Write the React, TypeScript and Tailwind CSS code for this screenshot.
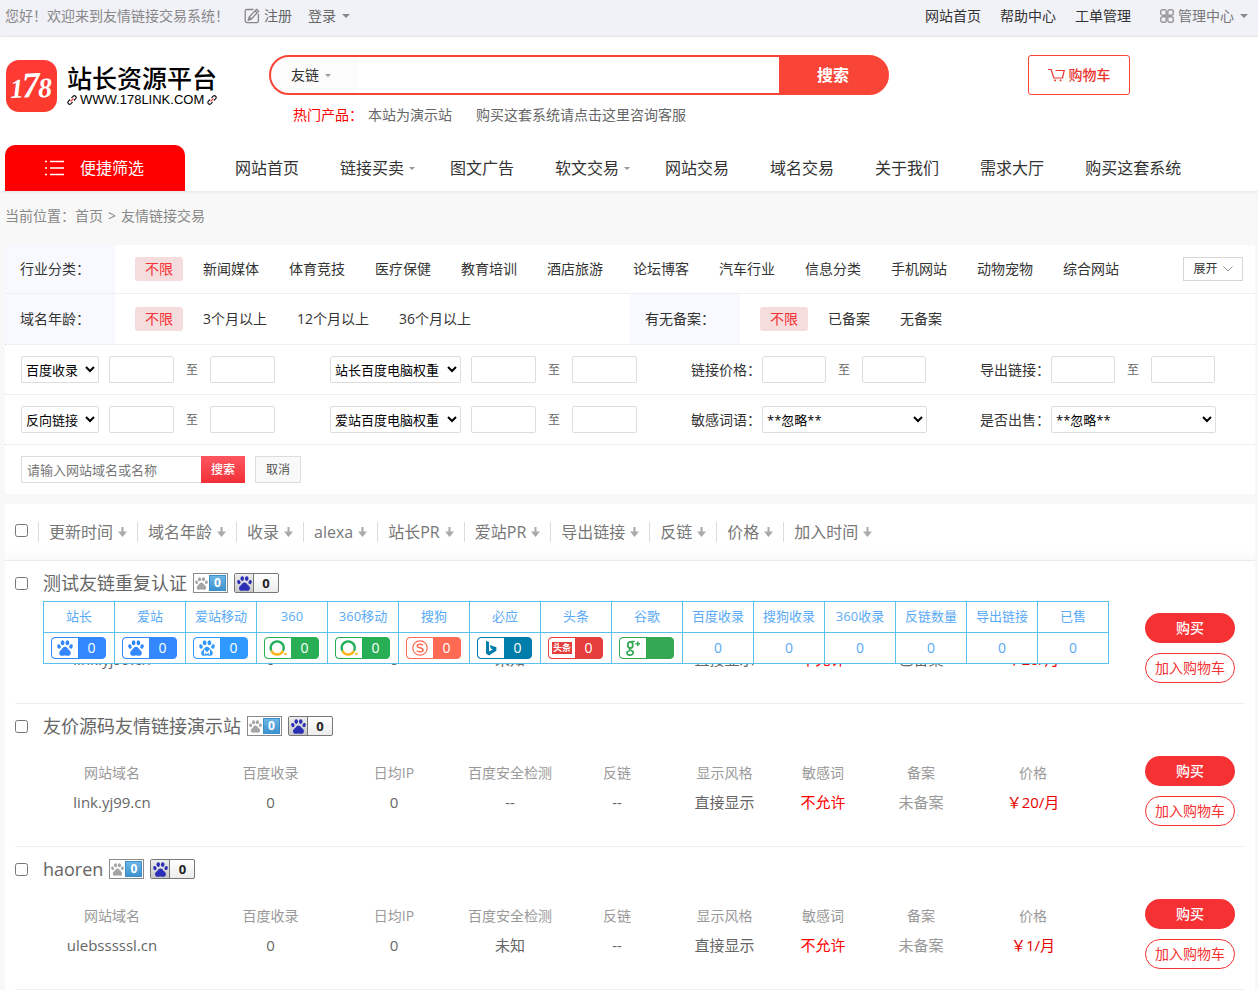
import React from 'react';

const topLinks = ['网站首页', '帮助中心', '工单管理'];

const navItems = [
  { name: '网站首页' },
  { name: '链接买卖', sub: true },
  { name: '图文广告' },
  { name: '软文交易', sub: true },
  { name: '网站交易' },
  { name: '域名交易' },
  { name: '关于我们' },
  { name: '需求大厅' },
  { name: '购买这套系统' },
];

const categories = ['不限', '新闻媒体', '体育竞技', '医疗保健', '教育培训', '酒店旅游', '论坛博客', '汽车行业', '信息分类', '手机网站', '动物宠物', '综合网站'];
const ages = ['不限', '3个月以上', '12个月以上', '36个月以上'];
const records = ['不限', '已备案', '无备案'];
const sorts = ['更新时间', '域名年龄', '收录', 'alexa', '站长PR', '爱站PR', '导出链接', '反链', '价格', '加入时间'];

const columns = [
  { name: '网站域名', width: 'w-[184px]' },
  { name: '百度收录', width: 'w-[133px]' },
  { name: '日均IP', width: 'w-[114px]' },
  { name: '百度安全检测', width: 'w-[118px]' },
  { name: '反链', width: 'w-[96px]' },
  { name: '显示风格', width: 'w-[119px]' },
  { name: '敏感词', width: 'w-[78px]' },
  { name: '备案', width: 'w-[118px]' },
  { name: '价格', width: 'w-[106px]' },
];

const sites = [
  { title: '测试友链重复认证', values: ['link.yj99.cn', '0', '0', '未知', '--', '直接显示', '不允许', '已备案', '￥20/月'], detail: true },
  { title: '友价源码友情链接演示站', values: ['link.yj99.cn', '0', '0', '--', '--', '直接显示', '不允许', '未备案', '￥20/月'] },
  { title: 'haoren', values: ['ulebsssssl.cn', '0', '0', '未知', '--', '直接显示', '不允许', '未备案', '￥1/月'] },
];

const Paw: React.FC<{ className?: string; mobile?: boolean }> = ({ className, mobile }) => (
  <svg viewBox="0 0 16 16" className={className} fill="currentColor" aria-hidden="true">
    <ellipse cx="5.6" cy="2.7" rx="1.9" ry="2.5" />
    <ellipse cx="10.4" cy="2.7" rx="1.9" ry="2.5" />
    <ellipse cx="2" cy="6.5" rx="1.7" ry="2.2" transform="rotate(-15 2 6.5)" />
    <ellipse cx="14" cy="6.5" rx="1.7" ry="2.2" transform="rotate(15 14 6.5)" />
    <path d="M8 6.8c2 0 2.6 1.9 4.5 3.6 2.3 2 1.3 5.4-1.3 5.4-1.3 0-2-.3-3.2-.3s-1.9.3-3.2.3c-2.6 0-3.600-3.400-1.300-5.400C5.400 8.700 6 6.800 8 6.800z" />
    {mobile && <path d="M5.600 14.500v-3.800l2.400 2.600 2.400-2.600v3.800" fill="none" stroke="#fff" strokeWidth="1.300" />}
  </svg>
);

const Caret: React.FC<{ className: string }> = ({ className }) => (
  <svg viewBox="0 0 8 4" className={className} fill="currentColor" aria-hidden="true">
    <path d="M0 0h8L4 4z" />
  </svg>
);

const Ring = () => (
  <svg viewBox="0 0 18 16" className="h-4 w-[18px]" fill="none" aria-hidden="true">
    <path d="M2.400 10.800A6.500 6.500 0 1 1 14 10.800" stroke="#22b05a" strokeWidth="2.400" />
    <path d="M2.400 10.800c2.300 4.900 9 4.900 11.600 0" stroke="#f9b51c" strokeWidth="2.600" />
    <circle cx="16.400" cy="14" r="1.300" fill="#f9b51c" />
  </svg>
);

const Sogou = () => (
  <svg viewBox="0 0 16 16" className="size-4" fill="none" stroke="#ff6a55" aria-hidden="true">
    <circle cx="8" cy="8" r="7.200" strokeWidth="1.200" />
    <path d="M11 5.200C9.300 3.900 5.200 3.900 5.200 6c0 2.300 5.800 1.400 5.800 4 0 2.300-4.300 2.200-6.200.8" strokeWidth="1.600" />
  </svg>
);

const Bing = () => (
  <svg viewBox="0 0 12 16" className="h-4 w-3" fill="#007daa" aria-hidden="true">
    <path d="M1 .8l3 1.100v9.700l3.800-2-2-1L4.700 5 11.400 7.200v3.600L4 15.600l-3-2z" />
  </svg>
);

const Toutiao = () => (
  <span className="flex h-3 w-5 items-center justify-center bg-[#e63d3d] text-[9px] leading-3 font-bold text-white">头条</span>
);

const Google = () => (
  <svg viewBox="0 0 18 18" className="size-[18px]" fill="none" stroke="#34a853" aria-hidden="true">
    <ellipse cx="6.300" cy="6" rx="2.500" ry="3.100" strokeWidth="1.800" />
    <path d="M7.500 2.500h3.200M6.200 9.200c-2 1.400.5 2 1.900 2.800 2.300 1.500.8 4.300-2.300 4.100-3.500-.2-4-3.700-.1-4.100" strokeWidth="1.600" />
    <path d="M13.800 2.500v4.500M11.500 4.800h4.600" strokeWidth="1.500" />
  </svg>
);

const bluePaw = <Paw className="size-4 text-[#3388ff]" />;

const stats = [
  { name: '站长', icon: bluePaw, box: 'border-[#3388ff] bg-[#3388ff]', value: '0' },
  { name: '爱站', icon: bluePaw, box: 'border-[#3388ff] bg-[#3388ff]', value: '0' },
  { name: '爱站移动', icon: <Paw mobile className="size-4 text-[#2f99ff]" />, box: 'border-[#2f99ff] bg-[#2f99ff]', value: '0' },
  { name: '360', icon: <Ring />, box: 'border-[#28af55] bg-[#28af55]', value: '0' },
  { name: '360移动', icon: <Ring />, box: 'border-[#28af55] bg-[#28af55]', value: '0' },
  { name: '搜狗', icon: <Sogou />, box: 'border-[#ff6a55] bg-[#ff6a55]', value: '0' },
  { name: '必应', icon: <Bing />, box: 'border-[#007daa] bg-[#007daa]', value: '0' },
  { name: '头条', icon: <Toutiao />, box: 'border-[#e63d3d] bg-[#e63d3d]', value: '0' },
  { name: '谷歌', icon: <Google />, box: 'border-[#34a853] bg-[#34a853]', value: '' },
  { name: '百度收录', value: '0' },
  { name: '搜狗收录', value: '0' },
  { name: '360收录', value: '0' },
  { name: '反链数量', value: '0' },
  { name: '导出链接', value: '0' },
  { name: '已售', value: '0' },
];

const ChainIcon = () => (
  <svg viewBox="0 0 10 10" className="size-[10px]" fill="none" stroke="#111" strokeWidth="1.100" aria-hidden="true">
    <path d="M4.500 3l1.700-1.800c1.500-1.500 4 .8 2.500 2.500L7 5.500M5.500 7L3.800 8.800c-1.500 1.500-4-.8-2.500-2.500L3 4.500" />
    <path d="M3.600 6.400l2.800-2.800" stroke="#e02020" />
  </svg>
);

const TopBar = () => (
  <div className="flex h-[37px] items-center justify-between border-b border-[#e8e8ea] bg-[#f1f1f8] pr-[10px] pb-1 pl-[5px] text-sm leading-5">
    <div className="flex items-center">
      <span className="text-[#888]">您好！欢迎来到友情链接交易系统！</span>
      <a href="#" className="ml-[15px] flex items-center gap-1 text-[#666]">
        <svg viewBox="0 0 16 16" className="size-4" fill="none" stroke="#888" strokeWidth="1.300" aria-hidden="true">
          <path d="M9.500 1.500H3A1.800 1.800 0 0 0 1.200 3.300v9.500A1.800 1.800 0 0 0 3 14.600h9.600a1.800 1.800 0 0 0 1.800-1.800V6" />
          <path d="M12.600 1.300l2 1.900-7.300 7.900-3 1.100.8-3.200zM11 3l2 1.900M5.200 9l2.100 2" />
        </svg>
        注册
      </a>
      <a href="#" className="ml-4 flex items-center gap-[6px] text-[#666]">
        登录
        <Caret className="h-1 w-2 text-[#888]" />
      </a>
    </div>
    <div className="flex items-center gap-[19px] text-[#333]">
      {topLinks.map((t) => (
        <a key={t} href="#">{t}</a>
      ))}
      <a href="#" className="ml-[10px] flex items-center text-[#777]">
        <svg viewBox="0 0 14 14" className="mr-1 size-[14px]" fill="none" stroke="#999" strokeWidth="1.400" aria-hidden="true">
          <path d="M6.200 6.200H2.700a2 2 0 0 1-2-2V2.700a2 2 0 0 1 2-2h1.500a2 2 0 0 1 2 2zM7.800 6.200V2.700a2 2 0 0 1 2-2h1.500a2 2 0 0 1 2 2v1.500a2 2 0 0 1-2 2zM6.200 7.800v3.500a2 2 0 0 1-2 2H2.700a2 2 0 0 1-2-2V9.800a2 2 0 0 1 2-2zM7.800 7.800h3.500a2 2 0 0 1 2 2v1.500a2 2 0 0 1-2 2H9.800a2 2 0 0 1-2-2z" />
        </svg>
        管理中心
        <Caret className="ml-[6px] h-1 w-2 text-[#888]" />
      </a>
    </div>
  </div>
);

const Header = () => (
  <header className="bg-white shadow-[0_1px_3px_rgba(0,0,0,0.08)]">
    <div className="flex h-[108px] pt-[18px] pl-[6px]">
      <a href="#" className="mt-[5px] flex h-[52px] w-[263px] gap-[10px]">
        <svg viewBox="0 0 51 52" className="h-[52px] w-[51px]" aria-hidden="true">
          <defs>
            <linearGradient id="tile" x1="0" y1="0" x2="0" y2="1">
              <stop offset="0" stopColor="#ff3a36" />
              <stop offset="1" stopColor="#fb3a2c" />
            </linearGradient>
          </defs>
          <rect width="51" height="52" rx="13" fill="url(#tile)" />
          <g fill="#fff" fontFamily="'Liberation Serif', serif" fontWeight="700" fontStyle="italic" transform="rotate(-3 25 26)">
            <text x="4" y="37" fontSize="27">1</text>
            <text x="16" y="37" fontSize="36">7</text>
            <text x="32" y="38" fontSize="28">8</text>
          </g>
        </svg>
        <span className="flex flex-col pt-[5px] text-black">
          <span className="text-[25px] leading-[26px] font-medium">站长资源平台</span>
          <span className="mt-px flex items-center gap-[3px] font-['Liberation_Sans',sans-serif] text-[13px] leading-4">
            <ChainIcon />
            WWW.178LINK.COM
            <ChainIcon />
          </span>
        </span>
      </a>
      <div className="w-[620px]">
        <form className="flex h-10 overflow-hidden rounded-full border-2 border-[#f94537] bg-[#f94537]">
          <button type="button" className="flex w-[86px] items-center gap-[6px] bg-[#fcfcfc] pl-5 text-sm text-[#333]">
            友链
            <Caret className="h-[3px] w-[6px] text-[#999]" />
          </button>
          <input aria-label="搜索内容" className="min-w-0 flex-1 bg-white px-3 text-sm outline-none" />
          <button type="submit" className="w-[108px] text-base font-bold text-white">搜索</button>
        </form>
        <p className="mt-[10px] flex pl-6 text-sm leading-5 text-[#666]">
          <span className="text-[#f00]">热门产品：</span>
          <a href="#" className="ml-[5px]">本站为演示站</a>
          <a href="#" className="ml-6">购买这套系统请点击这里咨询客服</a>
        </p>
      </div>
      <a href="#" className="ml-[139px] flex h-10 w-[102px] items-center justify-center gap-1 rounded-[3px] border border-[#f94537] text-sm font-medium text-[#e8352f]">
        <svg viewBox="0 0 17 14" className="h-[14px] w-[17px]" fill="none" stroke="currentColor" strokeWidth="1.200" aria-hidden="true">
          <path d="M0 1.500h3.200l2.600 8.500h8.700l1.700-7.500H7.500" />
          <path d="M6.200 11.500h1.700v1.700H6.200zM11.700 11.500h1.700v1.700h-1.700z" fill="currentColor" stroke="none" />
        </svg>
        购物车
      </a>
    </div>
    <nav className="flex h-[46px] items-center pl-[5px]">
      <a href="#" className="mr-[30px] flex h-full w-[180px] items-center rounded-t-[10px] bg-[#f00] pl-10 text-base text-white">
        <svg viewBox="0 0 20 16" className="mr-[15px] h-4 w-5" stroke="#fff" strokeWidth="1.400" aria-hidden="true">
          <path d="M0 1.500h2M5 1.500h14M0 8h2M5 8h14M0 14.500h2M5 14.500h14" />
        </svg>
        便捷筛选
      </a>
      {navItems.map((n) => (
        <a key={n.name} href="#" className={n.sub ? 'flex items-center pr-[15px] pl-5 text-base text-[#333]' : 'flex items-center pr-[21px] pl-5 text-base text-[#333]'}>
          {n.name}
          {n.sub && <Caret className="ml-[5px] h-[3px] w-[6px] text-[#999]" />}
        </a>
      ))}
    </nav>
  </header>
);

const Chips: React.FC<{ items: string[] }> = ({ items }) => (
  <div className="flex gap-[10px] pl-5 text-sm leading-6 text-[#333]">
    {items.map((c, i) => (
      <a key={c} href="#" className={i === 0 ? 'rounded-[3px] bg-[#f5dcdd] px-[10px] text-[#f53133]' : 'px-[10px]'}>{c}</a>
    ))}
  </div>
);

const Label: React.FC<{ text: string }> = ({ text }) => (
  <div className="flex w-[110px] items-center self-stretch bg-[#f8f9fe] pl-[15px] text-sm text-[#333]">{text}</div>
);

const Range: React.FC<{ name: string; width: string }> = ({ name, width }) => (
  <div className="flex items-center gap-3 text-xs text-[#666]">
    <input aria-label={name + '最小值'} className={'h-[27px] rounded-[2px] border border-[#ddd] bg-white px-1 ' + width} />
    至
    <input aria-label={name + '最大值'} className={'h-[27px] rounded-[2px] border border-[#ddd] bg-white px-1 ' + width} />
  </div>
);

const Select: React.FC<{ id?: string; label?: string; text: string; width: string }> = ({ id, label, text, width }) => (
  <select id={id} aria-label={label} className={'h-[27px] rounded-[2px] border border-[#ddd] bg-white text-[13px] text-black ' + width}>
    <option>{text}</option>
  </select>
);

const FilterPanel = () => (
  <section className="bg-white">
    <div className="flex h-[49px] items-center border-b border-dotted border-[#dfdfe4]">
      <Label text="行业分类：" />
      <Chips items={categories} />
      <button type="button" className="mr-3 ml-auto flex h-6 w-[60px] items-center justify-center gap-[5px] border border-[#d5d5d5] text-xs text-[#333]">
        展开
        <svg viewBox="0 0 10 6" className="h-[6px] w-[10px]" fill="none" stroke="#999" aria-hidden="true">
          <path d="M.5.500L5 5l4.500-4.500" />
        </svg>
      </button>
    </div>
    <div className="grid h-[51px] grid-cols-2 border-b border-dotted border-[#dfdfe4]">
      <div className="flex items-center">
        <Label text="域名年龄：" />
        <Chips items={ages} />
      </div>
      <div className="flex items-center">
        <Label text="有无备案：" />
        <Chips items={records} />
      </div>
    </div>
    <div className="grid h-[50px] grid-cols-[309fr_361fr_289fr_275fr] items-center border-b border-dotted border-[#dfdfe4] pl-4 text-sm text-[#333]">
      <div className="flex items-center gap-[10px]">
        <Select label="收录类型" text="百度收录" width="w-[78px]" />
        <Range name="百度收录" width="w-[65px]" />
      </div>
      <div className="flex items-center gap-[10px]">
        <Select label="站长权重类型" text="站长百度电脑权重" width="w-[131px]" />
        <Range name="站长百度电脑权重" width="w-[65px]" />
      </div>
      <div className="flex items-center gap-px">
        <span>链接价格：</span>
        <Range name="链接价格" width="w-[64px]" />
      </div>
      <div className="flex items-center gap-px">
        <span>导出链接：</span>
        <Range name="导出链接" width="w-[64px]" />
      </div>
    </div>
    <div className="grid h-[50px] grid-cols-[309fr_361fr_289fr_275fr] items-center border-b border-dotted border-[#dfdfe4] pl-4 text-sm text-[#333]">
      <div className="flex items-center gap-[10px]">
        <Select label="链接类型" text="反向链接" width="w-[78px]" />
        <Range name="反向链接" width="w-[65px]" />
      </div>
      <div className="flex items-center gap-[10px]">
        <Select label="爱站权重类型" text="爱站百度电脑权重" width="w-[131px]" />
        <Range name="爱站百度电脑权重" width="w-[65px]" />
      </div>
      <div className="flex items-center gap-px">
        <label htmlFor="sensitive">敏感词语：</label>
        <Select id="sensitive" text="**忽略**" width="w-[165px]" />
      </div>
      <div className="flex items-center gap-px">
        <label htmlFor="onsale">是否出售：</label>
        <Select id="onsale" text="**忽略**" width="w-[165px]" />
      </div>
    </div>
    <form className="flex h-[49px] items-center pl-4">
      <input aria-label="网站域名或名称" placeholder="请输入网站域名或名称" className="h-[27px] w-[180px] border border-r-0 border-[#ddd] pl-[5px] text-[13px] placeholder:text-[#777]" />
      <button type="submit" className="h-[27px] w-11 bg-linear-to-b from-[#fd5560] to-[#f32e36] text-xs font-medium text-white">搜索</button>
      <button type="reset" className="ml-[10px] h-[27px] w-[46px] border border-[#ddd] bg-[#f9f9f9] text-xs text-[#555]">取消</button>
    </form>
  </section>
);

const SortBar = () => (
  <div className="flex h-[57px] items-center border-b border-[#eaeaea] bg-linear-to-b from-white from-80% to-[#fafafa] pl-[10px]">
    <input type="checkbox" aria-label="全选" className="mr-[10px] mb-[3px] size-[13px]" />
    {sorts.map((s) => (
      <a key={s} href="#" className="flex h-5 items-center border-l border-[#ddd] pr-[10px] pl-[10px] text-base leading-5 text-[#777]">
        {s}
        <svg viewBox="0 0 9 10" className="ml-[5px] h-[10px] w-[9px]" fill="#aaa" aria-hidden="true">
          <path d="M3.500 0h2v4.500H9L4.500 10 0 4.500h3.500z" />
        </svg>
      </a>
    ))}
  </div>
);

const RankBadges = () => (
  <div className="flex gap-[6px]">
    <span className="flex h-5 w-[35px] items-center justify-between border border-[#8a8a8a] bg-white px-px">
      <Paw className="size-[13px] text-[#a5a5a5]" />
      <span className="flex h-4 w-[17px] items-center justify-center border border-[#3d8fc9] bg-linear-to-b from-[#6db6e6] to-[#3d92cf] text-xs leading-3 font-bold text-white">0</span>
    </span>
    <span className="flex h-5 w-[45px] overflow-hidden rounded-[2px] border border-[#777] bg-linear-to-b from-white to-[#ececec]">
      <span className="flex w-[19px] items-center justify-center border-r border-[#777] bg-linear-to-b from-[#eee] to-[#c8c8c8]">
        <Paw className="size-[15px] text-[#2a2fb5]" />
      </span>
      <span className="flex-1 text-center text-[13px] leading-[18px] font-bold text-[#222]">0</span>
    </span>
  </div>
);

// popup with the full set of engine weights, shown over the row
const StatsPopup = () => (
  <table className="absolute top-10 left-[38px] z-10 w-[1066px] table-fixed border-collapse bg-white text-center text-[13px] text-[#5aaaf5]">
    <thead>
      <tr>
        {stats.map((s) => (
          <th key={s.name} className="h-[31px] border border-[#5bc0eb] p-0 font-normal">{s.name}</th>
        ))}
      </tr>
    </thead>
    <tbody>
      <tr>
        {stats.map((s) => (
          <td key={s.name} className="h-[31px] border border-[#5bc0eb] p-0">
            {s.icon ? (
              <span className={'ml-[7px] flex h-[22px] w-[55px] overflow-hidden rounded-[4px] border text-sm leading-5 font-medium text-white ' + s.box}>
                <span className="flex w-[26px] items-center justify-center rounded-l-[3px] bg-white">{s.icon}</span>
                <span className="flex-1">{s.value}</span>
              </span>
            ) : (
              <span className="text-sm">{s.value}</span>
            )}
          </td>
        ))}
      </tr>
    </tbody>
  </table>
);

const cellColor = (i: number, v: string) => {
  if (i === 6) return 'text-[#f00]';
  if (i === 8) return 'text-[#e60000]';
  if (v === '未备案') return 'text-[#999]';
  return 'text-[#666]';
};

const App: React.FC = () => {
  return (
    <div className="min-h-screen bg-[#f8f8f8] font-['Open_Sans','Noto_Sans_CJK_SC',sans-serif]">
      <TopBar />
      <Header />
      <main className="pr-[3px] pl-[5px]">
        <div className="flex h-[54px] items-center gap-[5px] pb-1 text-sm text-[#888]">
          <span>当前位置：<a href="#">首页</a></span>
          <span>&gt;</span>
          <a href="#">友情链接交易</a>
        </div>
        <FilterPanel />
        <section className="mt-[10px] bg-white">
          <SortBar />
          {sites.map((site) => (
            <article key={site.title} className="relative">
              <div className="flex h-11 items-center pl-[10px]">
                <input type="checkbox" id={site.title} className="mr-[15px] size-[13px]" />
                <label htmlFor={site.title} className="mr-[6px] text-lg text-[#666]">{site.title}</label>
                <RankBadges />
              </div>
              {site.detail && <StatsPopup />}
              <div className="mx-[10px] flex items-start border-b border-[#eee] pt-2 pr-[10px] pb-5 pl-[5px]">
                <table className="mr-[59px] flex-1 table-fixed text-center text-sm">
                  <thead>
                    <tr>
                      {columns.map((c) => (
                        <th key={c.name} className={'h-[34px] p-0 font-normal text-[#999] ' + c.width}>{c.name}</th>
                      ))}
                    </tr>
                  </thead>
                  <tbody>
                    <tr>
                      {site.values.map((v, i) => (
                        <td key={i} className={'h-[26px] p-0 text-[15px] ' + cellColor(i, v)}>{v}</td>
                      ))}
                    </tr>
                  </tbody>
                </table>
                <div className="flex w-[90px] flex-col gap-[10px] text-sm">
                  <button type="button" className="h-[30px] rounded-full bg-[#f53133] font-medium text-white">购买</button>
                  <button type="button" className="h-[30px] rounded-full border border-[#f53133] text-[#f53133]">加入购物车</button>
                </div>
              </div>
            </article>
          ))}
        </section>
      </main>
    </div>
  );
};

export default App;
